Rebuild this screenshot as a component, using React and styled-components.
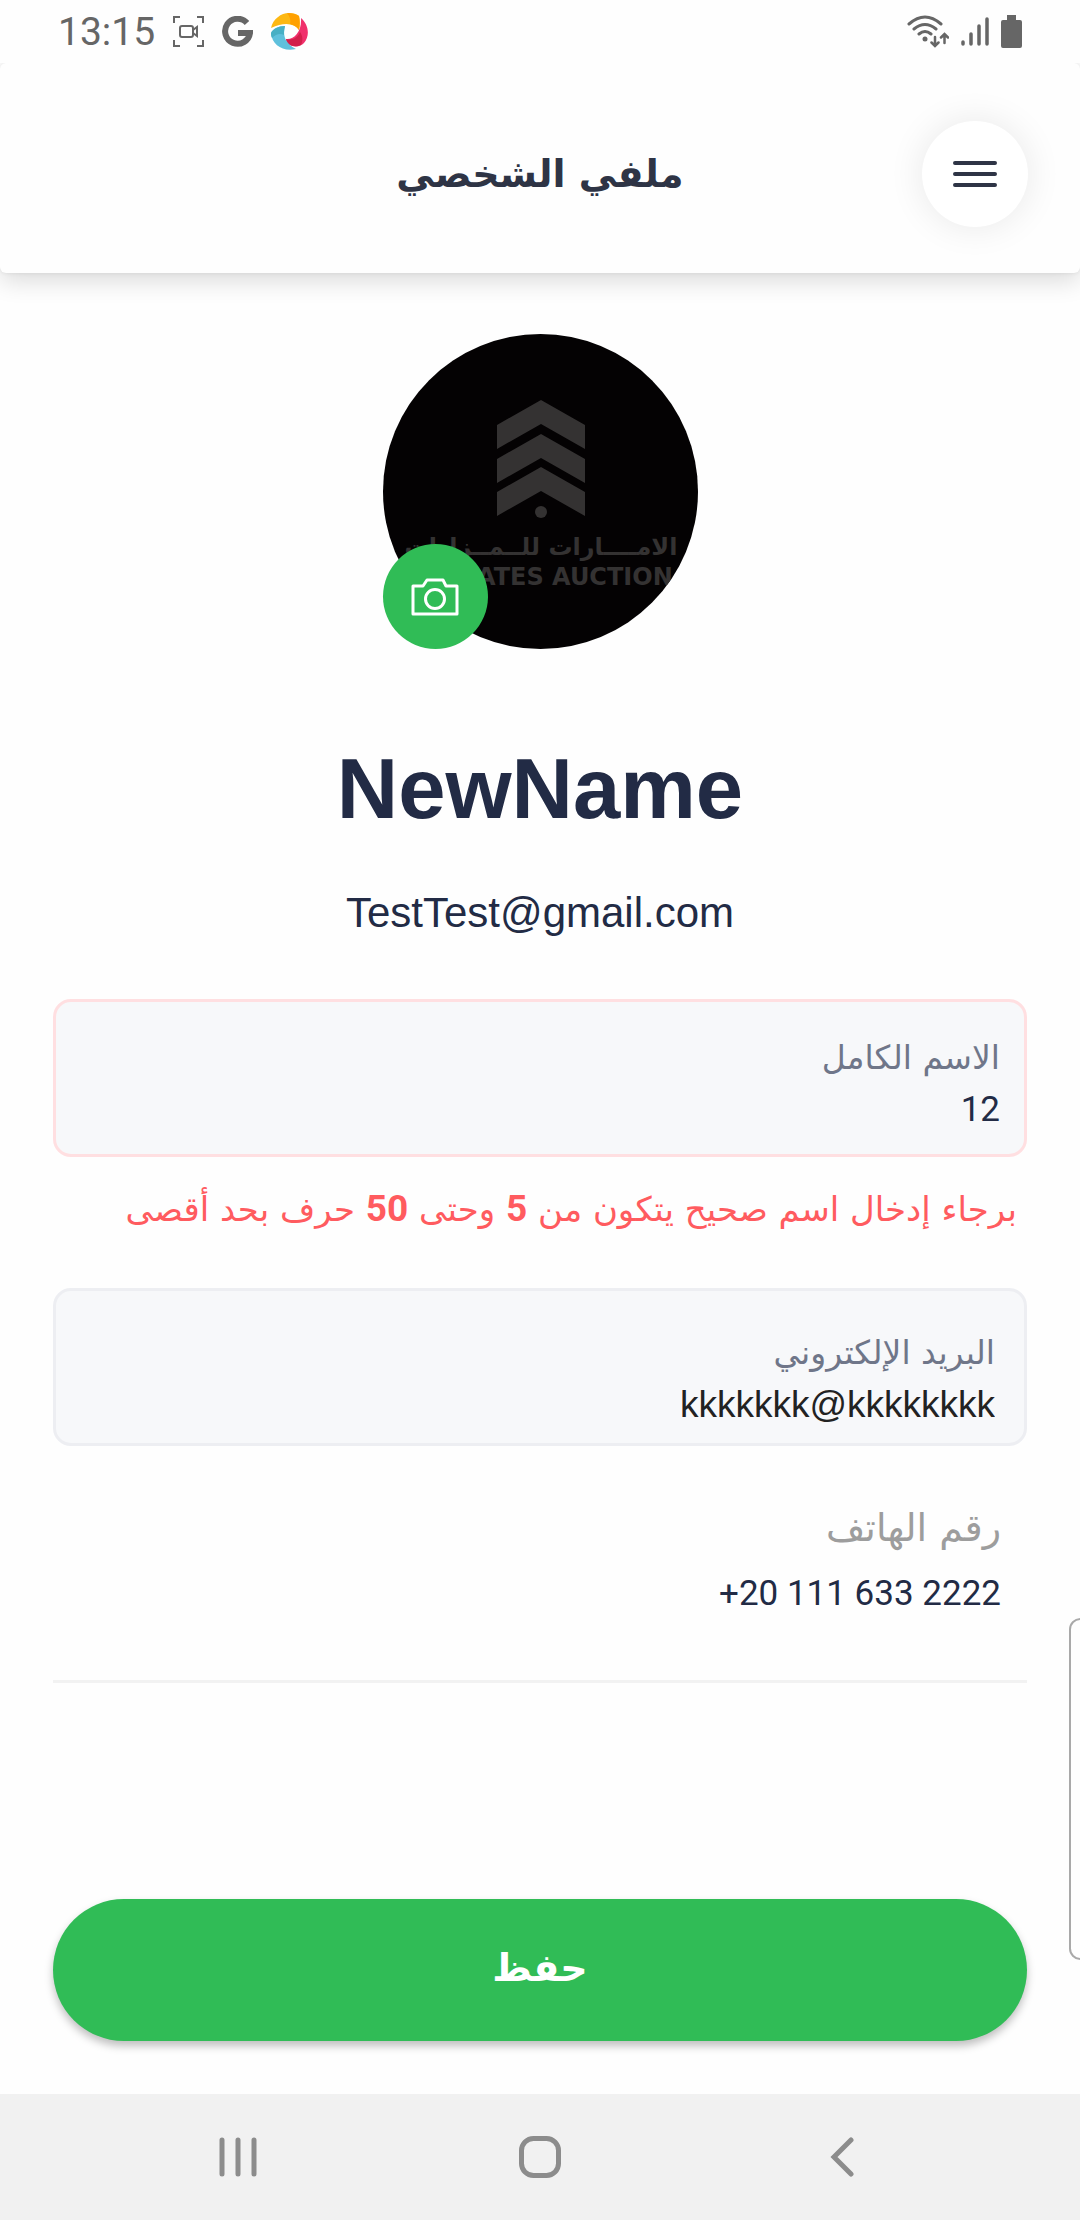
import React, { useState } from "react";
import styled, { createGlobalStyle } from "styled-components";

const arabic = `"DejaVu Sans", "Noto Sans", sans-serif`;
const latin = `"Liberation Sans", Arial, sans-serif`;
const digits = `Roboto, "Liberation Sans", sans-serif`;

const GlobalStyle = createGlobalStyle`
  *, *::before, *::after { box-sizing: border-box; }
  body { margin: 0; background: #fefefe; font-family: ${arabic}; color: #222b45; }
  button, input { font: inherit; color: inherit; }
`;

const Screen = styled.div`
  min-height: 100vh;
  display: flex;
  flex-direction: column;
  position: relative;
  overflow: hidden;
`;

const StatusBar = styled.div`
  display: flex;
  align-items: center;
  justify-content: space-between;
  height: 63px;
  padding: 0 58px;
  color: #666;
`;

const StatusGroup = styled.div`
  display: flex;
  align-items: center;
  gap: ${(p) => p.$gap}px;
`;

const Clock = styled.time`
  font: 400 39px/48px ${digits};
`;

const Header = styled.header`
  display: grid;
  grid-template-columns: 106px 1fr 106px;
  align-items: center;
  height: 210px;
  padding: 18px 52px 6px;
  border-radius: 6px;
  background: #fefefe;
  box-shadow: 0 8px 24px rgba(0, 0, 0, 0.14), 0 0 4px rgba(0, 0, 0, 0.08);
  clip-path: inset(0 0 -60px 0);
`;

const Title = styled.h1`
  grid-column: 2;
  margin: 0;
  text-align: center;
  font-size: 38px;
  line-height: 56px;
  font-weight: 700;
  color: #2e3445;
`;

const MenuButton = styled.button`
  display: grid;
  place-items: center;
  width: 106px;
  height: 106px;
  padding: 0;
  border: 0;
  border-radius: 50%;
  background: #fff;
  color: #2e3445;
  box-shadow: 0 0 36px rgba(0, 0, 0, 0.09);
`;

const Main = styled.main`
  flex: 1;
  display: flex;
  flex-direction: column;
  padding: 61px 53px 53px;
`;

const Avatar = styled.div`
  position: relative;
  align-self: center;
  width: 315px;
  height: 315px;
`;

const AvatarArt = styled.svg`
  display: block;
  border-radius: 50%;
  background: #040203;
`;

const CameraButton = styled.button`
  position: absolute;
  right: 210px;
  bottom: 0;
  display: grid;
  place-items: center;
  width: 105px;
  height: 105px;
  padding: 0;
  border: 0;
  border-radius: 50%;
  background: #30bc56;
  color: #fff;
`;

const Name = styled.h2`
  margin: 92px 0 0;
  text-align: center;
  font: 700 85px/96px ${latin};
`;

const Email = styled.p`
  margin: 52px 0 0;
  text-align: center;
  font: 400 42px/48px ${latin};
`;

const Fields = styled.form`
  flex: 1;
  display: flex;
  flex-direction: column;
  margin-top: 62px;
`;

const Field = styled.div`
  display: flex;
  flex-direction: column;
  height: 158px;
  padding: ${(p) => (p.$invalid ? "32px 24px 0" : "38px 29px 0")};
  border: 3px solid ${(p) => (p.$invalid ? "#ffdfe1" : "#edeef2")};
  border-radius: 18px;
  background: #f7f8fa;
`;

const Label = styled.label`
  font-size: 33px;
  line-height: 48px;
  color: #6f7689;
`;

const Input = styled.input`
  width: 100%;
  height: 56px;
  padding: 0;
  border: 0;
  outline: 0;
  background: transparent;
  text-align: right;
  font: 400 ${(p) => (p.$digits ? 35 : 37)}px/56px ${(p) => (p.$digits ? digits : latin)};
  color: ${(p) => (p.$digits ? "#222b45" : "#222")};
`;

const ErrorText = styled.p`
  margin: 24px 10px 0;
  font-size: 34px;
  line-height: 56px;
  color: #ff5b5f;

  b { font-family: ${digits}; font-size: 37px; font-weight: 700; }
`;

const EmailField = styled(Field)`
  margin-top: 51px;
`;

const Phone = styled.div`
  display: flex;
  flex-direction: column;
  height: 237px;
  padding: 54px 26px 0;
  border-bottom: 3px solid #f2f2f2;
`;

const PhoneLabel = styled(Label)`
  font-size: 38px;
  line-height: 56px;
  color: #9d9d9d;
`;

const PhoneInput = styled(Input)`
  margin-top: 10px;
`;

const SaveButton = styled.button`
  width: 100%;
  height: 142px;
  margin-top: auto;
  padding: 0 0 4px;
  border: 0;
  border-radius: 71px;
  background: #30bc56;
  color: #fff;
  font-size: 38px;
  font-weight: 700;
  line-height: 56px;
  box-shadow: 0 5px 8px rgba(0, 0, 0, 0.25);
`;

const EdgeHandle = styled.div`
  position: absolute;
  right: -12px;
  bottom: 260px;
  width: 23px;
  height: 342px;
  border: 2px solid #a9a9a9;
  border-radius: 12px;
`;

const NavBar = styled.nav`
  display: flex;
  justify-content: center;
  gap: 178px;
  height: 126px;
  background: #f1f1f1;
`;

const NavButton = styled.button`
  display: grid;
  place-items: center;
  width: 124px;
  padding: 0;
  border: 0;
  background: none;
  color: #8c8c8c;
`;

function StatusIcons() {
  return (
    <StatusGroup $gap={18}>
      <Clock dateTime="13:15">13:15</Clock>
      <svg width="31" height="31" viewBox="0 0 31 31" fill="none" stroke="currentColor" strokeWidth="2">
        <path d="M1 7V1h6M24 1h6v6M30 24v6h-6M7 30H1v-6" />
        <rect x="7" y="10" width="13" height="11" rx="2" />
        <path d="M20 14l4-3v9l-4-3" />
      </svg>
      <svg width="31" height="31" viewBox="0 0 31 31" fill="none" stroke="currentColor" strokeWidth="6">
        <path d="M25 7A12.500 12.500 0 1 0 28 17H16" />
      </svg>
      <svg width="37" height="37" viewBox="0 0 37 37">
        <path d="M0 15C2 6 10 0 18 0c4 0 8 1 10 3 1 5 1 9 0 14C23 10 13 9 0 15z" fill="#fdb813" />
        <path d="M16 0c5 0 9 1 12 3 1 5 1 9 0 14-2-3-5-5-9-6 1-4 0-7-3-11z" fill="#ffa000" />
        <path d="M30 5c8 7 9 18 3 25-4 4-11 5-17 0l-1-4c8 1 16-7 15-21z" fill="#f0306c" />
        <path d="M29 19c-2 5-7 9-14 7l1 4c4 4 10 4 14 2 2-4 2-9-1-13z" fill="#d21f4b" />
        <path d="M14 13c-3 10 1 18 11 23C12 39 1 32 0 20c2-4 7-7 14-7z" fill="#5fc0dc" />
        <path d="M14 13c-1 4-1 6-1 9-4-2-8-1-12 3-1-2-1-3-1-5 2-4 7-7 14-7z" fill="#48afc4" />
      </svg>
    </StatusGroup>
  );
}

function SignalIcons() {
  return (
    <StatusGroup $gap={12}>
      <svg width="42" height="34" viewBox="0 0 42 34" fill="none" stroke="currentColor" strokeWidth="3" strokeLinecap="round">
        <path d="M2 9Q18 -5 34 9M7 14q11-9 22 0M12 19q6-5 12 0" />
        <circle cx="18" cy="24" r="2.500" fill="currentColor" stroke="none" />
        <path d="M28 22v8M24.500 27.500l3.500 3.500 3.500-3.500M37.500 28V20M34 22.500l3.500-3.500 3.500 3.500" strokeWidth="2.500" />
      </svg>
      <svg width="28" height="31" viewBox="0 0 28 31" stroke="currentColor" strokeWidth="3.500" strokeLinecap="round">
        <path d="M2 26v2M10 18v10M18 10v18M26 3v25" />
      </svg>
      <svg width="21" height="33" viewBox="0 0 21 33" fill="currentColor">
        <path d="M6 0h9v5h4a2 2 0 0 1 2 2v24a2 2 0 0 1-2 2H2a2 2 0 0 1-2-2V7a2 2 0 0 1 2-2h4z" />
      </svg>
    </StatusGroup>
  );
}

function Emblem() {
  return (
    <AvatarArt width="315" height="315" viewBox="0 0 315 315" fill="#343232" role="img" aria-label="Emirates Auction">
      {[0, 34, 67].map((y) => (
        <path key={y} transform={`translate(0 ${y})`} d="M114 91L158 66L202 91V115L158 90L114 115Z" />
      ))}
      <circle cx="158" cy="178" r="6" />
      <text x="158" y="221" textAnchor="middle" direction="rtl" fontFamily="DejaVu Sans" fontWeight="700" fontSize="24">
        الامــــارات للــمــزادات
      </text>
      <text x="158" y="251" textAnchor="middle" direction="ltr" fontFamily="DejaVu Sans" fontWeight="700" fontSize="24">
        EMIRATES AUCTION
      </text>
    </AvatarArt>
  );
}

export default function App() {
  const [name, setName] = useState("12");
  const [email, setEmail] = useState("kkkkkkk@kkkkkkkk");

  return (
    <Screen>
      <GlobalStyle />
      <StatusBar>
        <StatusIcons />
        <SignalIcons />
      </StatusBar>
      <Header>
        <Title dir="rtl">ملفي الشخصي</Title>
        <MenuButton type="button" aria-label="القائمة">
          <svg width="46" height="28" viewBox="0 0 46 28" stroke="currentColor" strokeWidth="4" strokeLinecap="round">
            <path d="M3 3h40M3 14h40M3 25h40" />
          </svg>
        </MenuButton>
      </Header>
      <Main dir="rtl">
        <Avatar>
          <Emblem />
          <CameraButton type="button" aria-label="تغيير الصورة">
            <svg width="48" height="38" viewBox="0 0 48 38" fill="none" stroke="currentColor" strokeWidth="3" strokeLinejoin="round">
              <path d="M2 8h10l4-6h16l3 6h11v28H2z" />
              <circle cx="24" cy="21" r="9.500" />
            </svg>
          </CameraButton>
        </Avatar>
        <Name dir="ltr">NewName</Name>
        <Email dir="ltr">TestTest@gmail.com</Email>
        <Fields onSubmit={(e) => e.preventDefault()}>
          <Field $invalid>
            <Label htmlFor="name">الاسم الكامل</Label>
            <Input $digits id="name" dir="ltr" value={name} onChange={(e) => setName(e.target.value)} aria-describedby="name-error" />
          </Field>
          <ErrorText id="name-error">
            برجاء إدخال اسم صحيح يتكون من <b>5</b> وحتى <b>50</b> حرف بحد أقصى
          </ErrorText>
          <EmailField>
            <Label htmlFor="email">البريد الإلكتروني</Label>
            <Input id="email" dir="ltr" value={email} onChange={(e) => setEmail(e.target.value)} />
          </EmailField>
          <Phone>
            <PhoneLabel htmlFor="phone">رقم الهاتف</PhoneLabel>
            <PhoneInput $digits id="phone" dir="ltr" readOnly value="+20 111 633 2222" />
          </Phone>
          <SaveButton type="submit">حفظ</SaveButton>
        </Fields>
      </Main>
      <NavBar>
        <NavButton type="button" aria-label="التطبيقات الأخيرة">
          <svg width="38" height="40" viewBox="0 0 38 40" stroke="currentColor" strokeWidth="5" strokeLinecap="round">
            <path d="M3 3v34M19 3v34M35 3v34" />
          </svg>
        </NavButton>
        <NavButton type="button" aria-label="الرئيسية">
          <svg width="42" height="42" viewBox="0 0 42 42" fill="none" stroke="currentColor" strokeWidth="5">
            <rect x="2.500" y="2.500" width="37" height="37" rx="12" />
          </svg>
        </NavButton>
        <NavButton type="button" aria-label="رجوع">
          <svg width="24" height="40" viewBox="0 0 24 40" fill="none" stroke="currentColor" strokeWidth="5" strokeLinecap="round">
            <path d="M21 3L4 20L21 37" />
          </svg>
        </NavButton>
      </NavBar>
      <EdgeHandle />
    </Screen>
  );
}
